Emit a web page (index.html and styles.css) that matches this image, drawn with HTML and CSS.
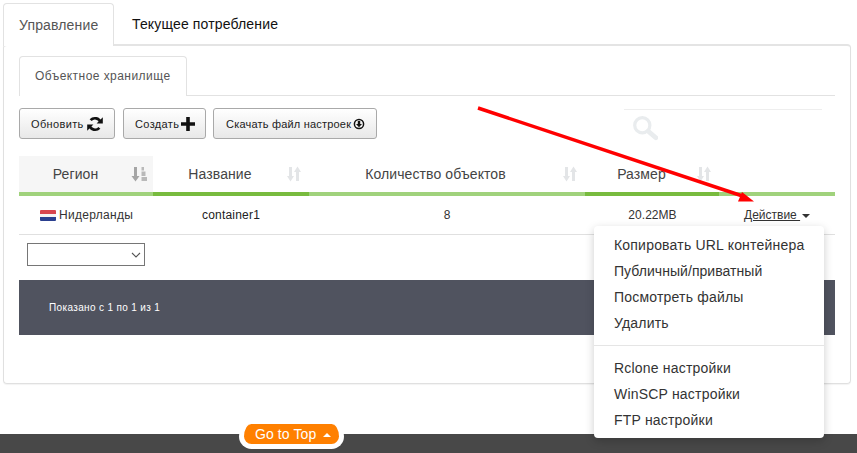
FILE: index.html
```html
<!DOCTYPE html>
<html lang="ru">
<head>
<meta charset="utf-8">
<title>Объектное хранилище</title>
<link rel="stylesheet" href="styles.css">
</head>
<body>
<div class="page">
  <ul class="tabs">
    <li class="tab active">Управление</li>
    <li class="tab">Текущее потребление</li>
  </ul>
  <div class="panel">
    <ul class="subtabs"><li class="subtab">Объектное хранилище</li></ul>
    <div class="toolbar">
      <button class="btn">Обновить
        <svg class="ico-refresh" viewBox="0 0 16 16"><path d="M13.600 6.300A5.900 5.900 0 0 0 3.600 4.200" fill="none" stroke="#111" stroke-width="2.600"/><path d="M15.800 1.200v6.200H9.600z" fill="#111"/><path d="M2.400 9.700a5.900 5.900 0 0 0 10 2.100" fill="none" stroke="#111" stroke-width="2.600"/><path d="M.2 14.800V8.600h6.200z" fill="#111"/></svg>
      </button>
      <button class="btn">Создать
        <svg class="ico-plus" viewBox="0 0 14 14"><path d="M5.200 0h3.600v5.200H14v3.600H8.800v5.200H5.200V8.800H0V5.200h5.200z" fill="#111"/></svg>
      </button>
      <button class="btn wide">Скачать файл настроек
        <svg class="ico-down" viewBox="0 0 12 12"><circle cx="6" cy="6" r="4.600" fill="none" stroke="#111" stroke-width="1.500"/><path d="M4.800 3h2.400v3H9L6 9.200 3 6h1.800z" fill="#111"/></svg>
      </button>
      <div class="search">
        <svg class="ico-search" viewBox="0 0 24 24"><circle cx="9.500" cy="9.500" r="7" fill="none" stroke="#e9ecee" stroke-width="3"/><path d="M15 15l7 6" stroke="#e9ecee" stroke-width="4.500" stroke-linecap="round"/></svg>
      </div>
    </div>
    <table class="grid">
      <colgroup><col class="c1"><col class="c2"><col class="c3"><col class="c4"><col class="c5"></colgroup>
      <thead>
        <tr>
          <th class="sorted col-region">Регион<svg class="sort sort-on" viewBox="0 0 16 16"><path d="M3 1h3v9h2.500L4.500 15.500 .5 10H3z" fill="#a5a5a5"/><path d="M10.500 1h2.500v3.500h-2.500zM10.500 5.500h4V10h-4zM10.500 11h5.500v4h-5.500z" fill="#b9b9b9"/></svg></th>
          <th class="active-col col-name">Название<svg class="sort" viewBox="0 0 16 16"><path d="M3 1h3v9h2L4.500 15.500 1 10h2z" fill="#e3e5e7"/><path d="M10 15V6H8l3.500-5.500L15 6h-2v9z" fill="#e3e5e7"/></svg></th>
          <th class="col-count">Количество объектов<svg class="sort" viewBox="0 0 16 16"><path d="M3 1h3v9h2L4.500 15.500 1 10h2z" fill="#e3e5e7"/><path d="M10 15V6H8l3.500-5.500L15 6h-2v9z" fill="#e3e5e7"/></svg></th>
          <th class="active-col col-size">Размер<svg class="sort" viewBox="0 0 16 16"><path d="M3 1h3v9h2L4.500 15.500 1 10h2z" fill="#e3e5e7"/><path d="M10 15V6H8l3.500-5.500L15 6h-2v9z" fill="#e3e5e7"/></svg></th>
          <th></th>
        </tr>
      </thead>
      <tbody>
        <tr>
          <td class="cell-region"><span class="flag"></span>Нидерланды</td>
          <td class="cell-name">container1</td>
          <td class="cell-center cell-count">8</td>
          <td class="cell-center cell-size">20.22MB</td>
          <td class="cell-action"><a class="action" href="#">Действие </a><span class="caret"></span></td>
        </tr>
      </tbody>
    </table>
    <div class="length">
      <div class="select-wrap">
        <select class="length-select"><option></option></select>
        <svg class="select-chevron" viewBox="0 0 10 6"><path d="M1 1l4 4 4-4" fill="none" stroke="#555" stroke-width="1.100"/></svg>
      </div>
    </div>
    <div class="info">Показано с 1 по 1 из 1</div>
  </div>
  <footer class="footer"><div class="gotop">Go to Top<span class="caret-up"></span></div></footer>
  <ul class="menu">
    <li>Копировать URL контейнера</li>
    <li class="tight">Публичный/приватный</li>
    <li>Посмотреть файлы</li>
    <li>Удалить</li>
    <li class="divider"></li>
    <li>Rclone настройки</li>
    <li>WinSCP настройки</li>
    <li>FTP настройки</li>
  </ul>
  <svg class="arrow" viewBox="0 0 857 453"><path d="M478 108L744 196.500" stroke="#f00" stroke-width="3.500" fill="none"/><path d="M742 192L754 201.500 738 201.500z" fill="#f00"/></svg>
</div>
</body>
</html>
```
FILE: styles.css
```css
* { box-sizing: border-box; }
html, body { margin: 0; padding: 0; background: #fff; }
body { font-family: "Liberation Sans", Arial, sans-serif; color: #333; overflow: hidden; }
.page { position: relative; width: 857px; height: 453px; overflow: hidden; }
ul { list-style: none; margin: 0; padding: 0; }

.tabs { display: flex; height: 44px; padding: 3px 0 0 3px; }
.tab { padding: 0 16px; line-height: 42px; font-size: 14px; letter-spacing: .15px; color: #111; margin-right: 2px; }
.tab.active { color: #555; border: 1px solid #e2e2e2; border-bottom: 0; border-radius: 4px 4px 0 0; padding: 0 15px; height: 43px; background: #fff; position: relative; z-index: 1; width: 111px; margin-right: 2px; }

.panel { margin-left: 3px; width: 848px; height: 340px; border: 1px solid #e0e0e0; border-top: 2px solid #e4e4e4; border-radius: 4px; box-shadow: 0 1px 1px rgba(0,0,0,.05); padding: 10px 15px 0; }
.subtabs { display: flex; height: 40px; border-bottom: 1px solid #e2e2e2; }
.subtab { width: 168px; height: 40px; border: 1px solid #e2e2e2; border-bottom: 0; border-radius: 4px 4px 0 0; background: #fff; font-size: 12px; letter-spacing: .45px; color: #555; line-height: 38px; padding-left: 15px; }

.toolbar { display: flex; height: 60px; padding-top: 12px; position: relative; }
.btn { height: 31px; padding: 0 0 0 11px; margin: 0 8px 0 0; display: flex; align-items: center; gap: 2px; border: 1px solid #a9a9a9; border-radius: 3px; background: linear-gradient(#fff, #e8e8e8); font: 11px "Liberation Sans", Arial, sans-serif; letter-spacing: .35px; color: #222; }
.btn:nth-child(1) { width: 96px; gap: 3px; }
.btn:nth-child(2) { width: 83px; }
.btn.wide { width: 164px; margin-right: 0; margin-left: -1px; padding-left: 12px; letter-spacing: .2px; }
.ico-refresh { width: 16px; height: 16px; }
.ico-plus { width: 14px; height: 14px; }
.ico-down { width: 12px; height: 12px; }
.search { width: 198px; height: 40px; border-top: 1px solid #eee; margin: 1px 0 0 247px; padding: 5px 0 0 8px; }
.ico-search { width: 26px; height: 26px; display: block; }

.grid { width: 816px; table-layout: fixed; border-collapse: separate; border-spacing: 0; }
.c1 { width: 134px; } .c2 { width: 156px; } .c3 { width: 276px; } .c4 { width: 134px; } .c5 { width: 116px; }
.grid th { height: 40px; padding: 0; border-bottom: 4px solid #a0d27c; font-size: 14px; letter-spacing: .1px; font-weight: 400; color: #444; position: relative; text-align: center; }
.grid th.sorted { background: #f6f6f6; }
.grid th.active-col { border-bottom-color: #78bb3e; }
.col-region { padding-right: 21px !important; }
.col-name { padding-right: 22px !important; }
.col-count { padding-right: 23px !important; }
.col-size { padding-right: 21px !important; }
.sort { width: 16px; height: 16px; position: absolute; top: 10px; }
.col-region .sort { left: 112px; }
.col-name .sort { left: 133px; }
.col-count .sort { left: 253px; }
.col-size .sort { left: 111px; }
.grid td { height: 39px; padding: 0; border-bottom: 1px solid #e0e0e0; font-size: 12px; letter-spacing: .2px; color: #333; }
.cell-region { padding-left: 21px !important; letter-spacing: .3px !important; }
.flag { display: inline-block; width: 16px; height: 11px; margin-right: 3px; vertical-align: -2px; background: linear-gradient(#d8454e 0 33%, #f6f2f2 33% 66%, #2a3f8f 66%); border-radius: 1px; }
.cell-name { padding-left: 49px !important; color: #222 !important; }
.cell-center { text-align: center; }
.cell-count { padding-right: 0 !important; letter-spacing: 0 !important; }
.cell-size { padding-left: 1px !important; letter-spacing: .05px !important; }
.cell-action { padding-left: 25px !important; letter-spacing: 0 !important; }
.action { color: #333; text-decoration: underline; }
.caret { display: inline-block; margin-left: 2px; border: 4px solid transparent; border-top-color: #333; border-bottom: 0; vertical-align: 1px; }

.length { height: 45px; padding: 8px 0 0 8px; }
.select-wrap { position: relative; width: 118px; height: 23px; }
.length-select { appearance: none; width: 118px; height: 23px; display: block; background: #fff; border: 1px solid #767676; border-radius: 0; font-size: 12px; }
.select-chevron { position: absolute; right: 4px; top: 9px; width: 10px; height: 6px; }
.info { height: 55px; background: #50535f; color: #fff; font-size: 10px; letter-spacing: .35px; line-height: 55px; padding-left: 30px; }

.footer { position: absolute; left: 0; right: 0; bottom: 0; height: 19px; background: #484848; }
.gotop { position: absolute; left: 239px; top: -10px; width: 105px; height: 25px; background: #ff8000; border: 5px solid #fff; border-top: 0; border-radius: 14px; color: #fff; font-size: 14px; letter-spacing: .1px; line-height: 20px; padding-left: 11px; white-space: nowrap; }
.caret-up { display: inline-block; margin-left: 7px; border: 4px solid transparent; border-bottom-color: #fff; border-top: 0; vertical-align: 2px; }

.menu { position: absolute; left: 594px; top: 226px; width: 230px; height: 212px; padding: 6px 0 0; background: #fff; border-radius: 4px; box-shadow: 0 3px 10px rgba(0,0,0,.2); font-size: 14px; letter-spacing: .2px; color: #333; }
.menu li { height: 26px; line-height: 26px; padding-left: 20px; }
.menu li.tight { letter-spacing: .05px; }
.menu li.divider { height: 1px; margin: 9px 0 9px; padding: 0; background: #e5e5e5; }

.arrow { position: absolute; left: 0; top: 0; width: 857px; height: 453px; pointer-events: none; }
```
